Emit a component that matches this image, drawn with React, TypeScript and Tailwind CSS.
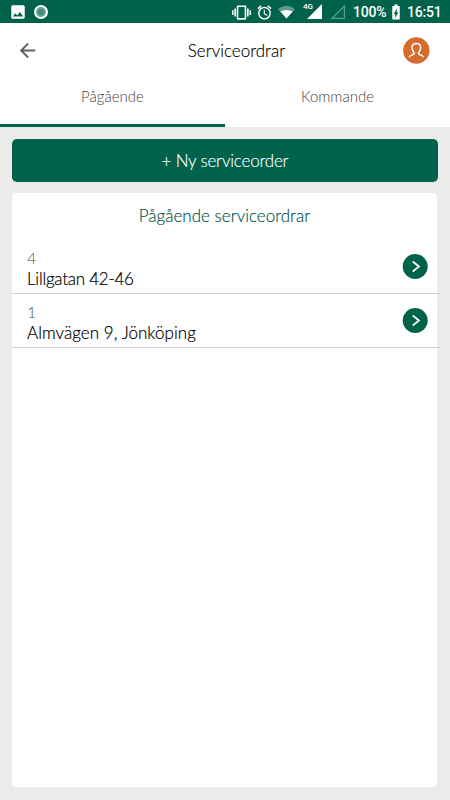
import clsx from 'clsx';
import { MdAccessAlarm, MdArrowBack, MdBatteryChargingFull, MdImage, MdVibration } from 'react-icons/md';

type ServiceOrder = {
    count: string;
    address: string;
    addressClass: string;
};

const orders: ServiceOrder[] = [
    { count: '4', address: 'Lillgatan 42-46', addressClass: 'tracking-[-0.25px]' },
    { count: '1', address: 'Almvägen 9, Jönköping', addressClass: 'tracking-[0.05px]' },
];

const StatusBar = () => (
    <div className="flex h-[23px] shrink-0 items-center bg-[#00624b] pl-[9px] pt-px font-['Roboto',sans-serif] text-white">
        <MdImage size={18} />
        <svg className="ml-[7px]" width="14" height="14" viewBox="0 0 14 14">
            <circle cx="7" cy="7" r="7" fill="#fff" />
            <circle cx="7" cy="7" r="5" fill="#6aa698" />
            <circle cx="7" cy="7" r="3" fill="#3f8a79" />
        </svg>
        <div className="ml-[184px] flex items-center">
            <MdVibration size={19} />
            <MdAccessAlarm className="ml-[5px]" size={17} />
            <svg className="ml-[5px]" width="17" height="14" viewBox="0 0 18 14">
                <path d="M0 4Q9-3 18 4L9 14Z" fill="#5b9b8c" />
                <path d="M2.500 6.500Q9 3 15.500 6.500L9 14Z" fill="#fff" />
            </svg>
            <div className="relative ml-[8px] h-[16px] w-[20px]">
                <span className="absolute left-0 top-[-1px] text-[8px] font-medium leading-[8px]">4G</span>
                <svg className="absolute left-[3px] top-0" width="16" height="16" viewBox="0 0 16 16">
                    <path d="M16 0V15H1Z" fill="#fff" />
                </svg>
            </div>
            <svg className="ml-[7px]" width="17" height="16" viewBox="0 0 17 16">
                <path d="M14.400 2V14.400H2Z" fill="none" stroke="#5b9b8c" strokeWidth="1.300" />
            </svg>
        </div>
        <span className="ml-[6px] w-[34px] text-[14px] font-medium leading-[20px] tracking-[-0.2px]">100%</span>
        <MdBatteryChargingFull size={18} />
        <span className="ml-[2px] text-[14px] font-medium leading-[20px] tracking-[-0.2px]">16:51</span>
    </div>
);

const Avatar = () => (
    <svg width="27" height="27" viewBox="0 0 27 27" fill="none">
        <circle cx="13.300" cy="13.500" r="13.200" fill="#d66b2d" />
        <path
            d="M6.500 19.800C7 17.800 11.200 18.300 11.200 16.300C11.200 15.100 9 14 9 10.700C9 8 11 6.500 13.300 6.500S17.600 8 17.600 10.700C17.600 14 15.400 15.100 15.400 16.300C15.400 18.300 19.600 17.800 20.200 19.800"
            stroke="#fff"
            strokeWidth="1.500"
            strokeLinecap="round"
        />
    </svg>
);

const Chevron = () => (
    <svg width="26" height="26" viewBox="0 0 26 26" fill="none">
        <circle cx="13.200" cy="12.500" r="12.500" fill="#00624b" />
        <path d="M10.700 7.500L17 12.500L10.700 17.500" stroke="#fff" strokeWidth="1.700" />
    </svg>
);

const Tab = ({ label, active }: { label: string; active?: boolean }) => (
    <button
        className={clsx(
            'flex h-[49px] flex-1 justify-center border-b-[3px] pt-[8px] text-[15px] leading-[20px] text-[#444]',
            active ? 'border-[#00624b]' : 'border-transparent',
        )}
    >
        {label}
    </button>
);

const OrderRow = ({ order }: { order: ServiceOrder }) => (
    <button className="flex h-[54px] w-[428px] items-center justify-between border-b border-[#d0d0d0] pl-[15px] pr-[12px] text-left">
        <div className="self-start">
            <div className="h-[28px] pt-[6px] text-[16px] leading-[24px] text-[#555]">{order.count}</div>
            <div
                className={clsx(
                    'text-[17px] leading-[22px] text-black [-webkit-text-stroke:0.2px_black]',
                    order.addressClass,
                )}
            >
                {order.address}
            </div>
        </div>
        <Chevron />
    </button>
);

const App = () => (
    <div className="flex h-[800px] w-[450px] flex-col overflow-hidden bg-[#ebebeb] font-['Lato',sans-serif] font-light">
        <StatusBar />
        <header className="shrink-0 bg-white">
            <div className="grid h-[55px] grid-cols-[60px_1fr_60px] items-center pl-[16px] pr-[8px]">
                <MdArrowBack size={23} color="#616161" />
                <h1 className="pl-[15px] text-center text-[17px] text-black [-webkit-text-stroke:0.15px_black]">
                    Serviceordrar
                </h1>
                <div className="flex justify-end pr-[12px]">
                    <Avatar />
                </div>
            </div>
            <div className="flex">
                <Tab label="Pågående" active />
                <Tab label="Kommande" />
            </div>
        </header>
        <main className="flex flex-1 flex-col px-[12px] pb-[13px] pt-[12px]">
            <button className="h-[43px] rounded-[5px] bg-[#00624b] text-[17px] tracking-[-0.2px] text-white [-webkit-text-stroke:0.15px_white]">
                + Ny serviceorder
            </button>
            <section className="mt-[11px] mr-px flex-1 rounded-[4px] bg-white">
                <h2 className="h-[47px] pt-[11px] text-center text-[17px] leading-[24px] text-[#00533e] [-webkit-text-stroke:0.15px_#00533e]">
                    Pågående serviceordrar
                </h2>
                {orders.map((order) => (
                    <OrderRow key={order.address} order={order} />
                ))}
            </section>
        </main>
    </div>
);

export default App;
